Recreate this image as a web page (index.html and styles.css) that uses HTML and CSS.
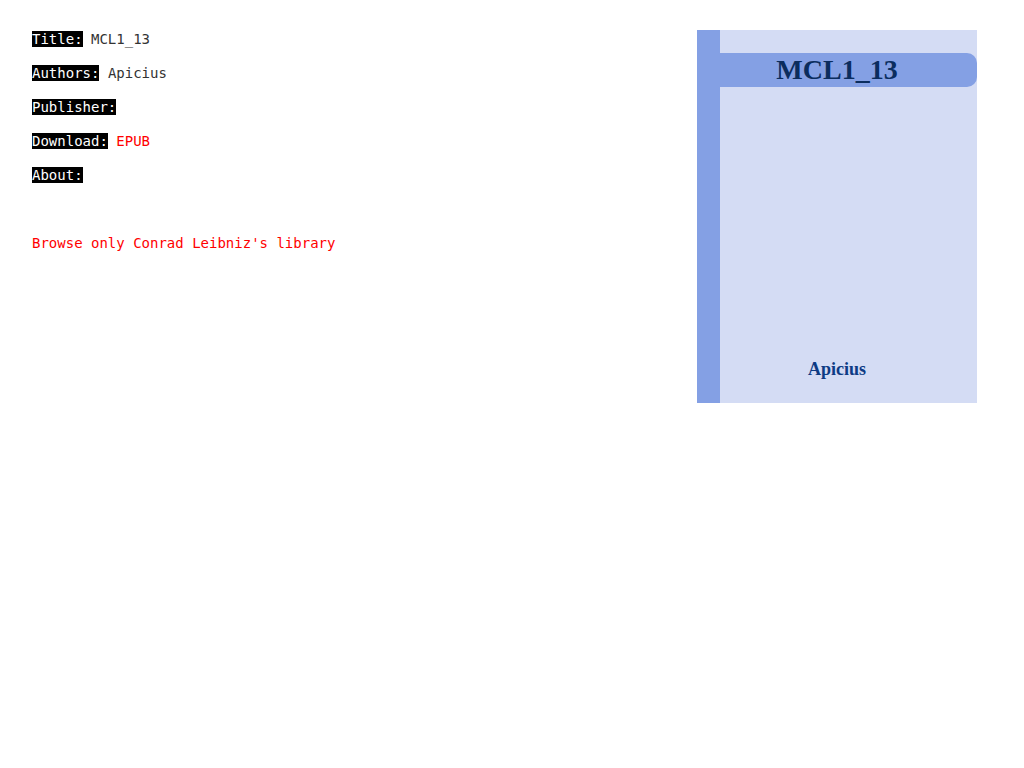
FILE: index.html
```html
<!DOCTYPE html>
<html>
<head>
<meta charset="utf-8">
<link rel="stylesheet" href="styles.css">
</head>
<body>
<div class="page">
  <div class="info">
    <p><span class="label">Title:</span> <span class="value">MCL1_13</span></p>
    <p><span class="label">Authors:</span> <span class="value">Apicius</span></p>
    <p><span class="label">Publisher:</span></p>
    <p><span class="label">Download:</span> <a class="link" href="#">EPUB</a></p>
    <p><span class="label">About:</span></p>
    <p class="browse"><a class="link" href="#">Browse only Conrad Leibniz's library</a></p>
  </div>
  <div class="cover">
    <div class="spine"></div>
    <div class="face">
      <div class="band">MCL1_13</div>
      <div class="author">Apicius</div>
    </div>
  </div>
</div>
</body>
</html>
```
FILE: styles.css
```css
html, body {
  margin: 0;
  padding: 0;
  background: #ffffff;
}
.page {
  display: flex;
  justify-content: space-between;
  align-items: flex-start;
  padding: 29px 47px 0 32px;
  font-family: "DejaVu Sans Mono", monospace;
  font-size: 14px;
  line-height: 20px;
  color: #333333;
}
.info p {
  margin: 0 0 14px 0;
}
.info p.browse {
  margin-top: 48px;
}
.label {
  background: #000000;
  color: #ffffff;
}
.value {
  color: #333333;
}
.link {
  color: #ff0000;
  text-decoration: none;
}
.cover {
  display: flex;
  width: 280px;
  height: 373px;
  margin-top: 1px;
  background: #d4dcf4;
}
.spine {
  width: 23px;
  background: #84a0e4;
}
.face {
  flex: 1;
  display: flex;
  flex-direction: column;
  padding-top: 23px;
}
.band {
  height: 34px;
  background: #84a0e4;
  border-radius: 0 10px 10px 0;
  display: flex;
  align-items: center;
  justify-content: center;
  font-family: "Liberation Serif", serif;
  font-weight: bold;
  font-size: 28px;
  color: #0b2d5e;
  padding-right: 23px;
}
.author {
  margin-top: 272px;
  text-align: center;
  font-family: "Liberation Serif", serif;
  font-weight: bold;
  font-size: 18px;
  line-height: 20px;
  color: #0d3b84;
  padding-right: 23px;
}
```
